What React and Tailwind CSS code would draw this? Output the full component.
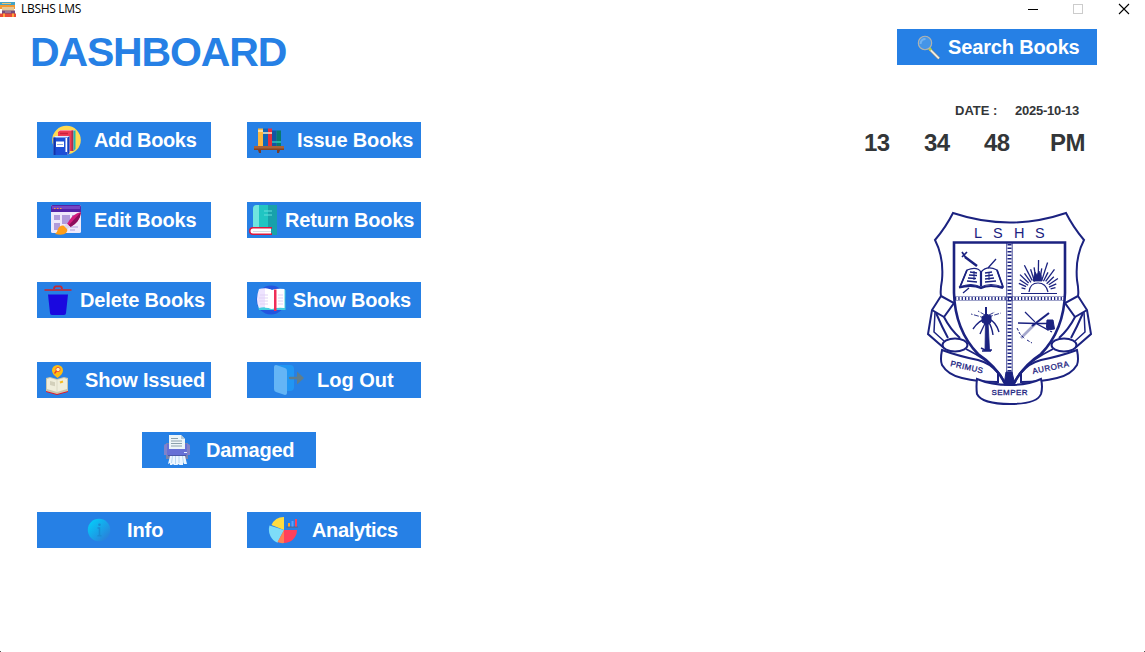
const NAVY = "#1b2280";

const icons = {
  add: (
    <>
      <circle cx="15.5" cy="15" r="14.3" fill="#ffda52" />
      <path d="M7 7l2-2h15v20H7z" fill="#ffd9e0" />
      <path d="M7 7l2-1.500h13V26H7z" fill="#f03a55" />
      <path d="M20.500 5.500h2V26h-2z" fill="#a6324f" />
      <path d="M22.500 5.500h2V24l-2 2z" fill="#20b8b0" />
      <path d="M9 8.500h8" stroke="#c8203c" strokeWidth="1.500" />
      <path d="M2.500 12.500l2-1.500h14v17l-2 2H2.500z" fill="#dfeaff" />
      <path d="M2.500 12.500h14V30H2.500z" fill="#1d4fd7" />
      <path d="M2.500 12.500h2V30h-2z" fill="#1335a8" />
      <path d="M16.500 12.500l2-1.500v17l-2 2z" fill="#1640bd" />
      <path d="M14.500 13h1.500v14h-1.500z" fill="#fff" />
      <path d="M5 16.500h8V22H5z" fill="#fff" />
      <path d="M6 19.500h6" stroke="#8ea8e6" />
    </>
  ),
  edit: (
    <>
      <rect width="30" height="28" rx="1.500" fill="#efe9fb" />
      <path d="M0 1.500Q0 0 1.500 0h27Q30 0 30 1.500V7H0z" fill="#5423a8" />
      <path d="M1 1h28v3H1z" fill="#7546c4" />
      <path d="M3 3.500h1.500M6 3.500h1.500M9 3.500h1.500" stroke="#ff9a3c" />
      <path d="M3 10h6v5H3zM3 18h6v7H3zM11 10h8v9h-8zM21 10h6v5h-6z" fill="#b19bdc" />
      <path d="M19 22h8M19 25h5" stroke="#c5b5e5" strokeWidth="1.500" />
      <path d="M30 7Q22 8 16 19l3.500 3Q29 17 30 7z" fill="#d31b7c" />
      <path d="M30 7L17.500 20.500l2 1.500Q29 17 30 7z" fill="#8c0d5c" />
      <path d="M15.500 18.500l4 3.500-4 2.500-3-3z" fill="#dcd7e8" />
      <path d="M12.500 20.500q-4-.5-5.500 3.500-1 4-3 5 8 2 11-1 2-2 1-4z" fill="#ff9e18" />
    </>
  ),
  issue: (
    <>
      <path d="M4 3.500h5V21H4z" fill="#ffb83e" />
      <path d="M9 3.500h5V21H9z" fill="#1266b8" />
      <path d="M14 3.500h4V21h-4z" fill="#e5303e" />
      <path d="M18 5.500h4.500V21H18z" fill="#1455a2" />
      <path d="M22.500 5.500H27V21h-4.500z" fill="#08796f" />
      <path d="M4 6h5M9 8h9" stroke="#ffe9bd" strokeWidth="1.500" />
      <path d="M18 17h9" stroke="#28c7bd" strokeWidth="1.500" />
      <path d="M0 21h30v4H0z" fill="#a96238" />
      <path d="M0 23.500h30V25H0z" fill="#854323" />
      <path d="M4 25h3v3H5zM23 25h3l-1 3h-2z" fill="#743d2b" />
    </>
  ),
  returned: (
    <>
      <path d="M4 4q0-4 4-4h20v30H4z" fill="#20c5c2" />
      <path d="M4 4q0-4 4-4h2v23H4z" fill="#70e5df" />
      <path d="M19 0h9v30h-9z" fill="#18a1aa" />
      <path d="M15 6h8M15 10h8" stroke="#64dfdb" />
      <path d="M23 22H4q-4 0-4 4t4 4h19v-1.500l-1-1V24l1-.5z" fill="#df173d" />
      <path d="M22 23.500H4q-2.500 0-2.500 2.500T4 28.500h18z" fill="#fff" />
      <path d="M4 26.500h18" stroke="#d5dbe2" />
    </>
  ),
  remove: (
    <>
      <path d="M1.500 5h27" stroke="#c62932" strokeWidth="1.600" />
      <path d="M11 4q0-2.500 2-2.700h4q2 .2 2 2.700" fill="none" stroke="#c62932" strokeWidth="1.800" />
      <path d="M5 9.500h20l-2 18.500q0 2-2 2H9q-2 0-2-2z" fill="#1a08df" />
    </>
  ),
  issued: (
    <>
      <path d="M4 25l11 3 11-3v2l-11 3-11-3z" fill="#e41628" />
      <path d="M4 13l4-1 7 2 7-2 4 1v13l-11 3-11-3z" fill="#c9c6ad" />
      <path d="M5 14l3-1 7 2 7-2 3 1v10l-10 3-10-3z" fill="#efeddb" />
      <path d="M15 15v12" stroke="#dcd9c5" />
      <path d="M8 16l5 1.200v4L8 20z" fill="#d3d0bb" />
      <path d="M18 17.500l3-1" stroke="#f6bb22" strokeWidth="2" />
      <path d="M15.500 13q-5.500-4-5.500-7.500a5.500 5.500 0 0 1 11 0q0 3.500-5.500 7.500z" fill="#ffbd12" />
      <circle cx="16" cy="4.500" r="2.200" fill="#fff1bb" stroke="#ef5a38" />
      <path d="M14.500 6l-2 2.500" stroke="#e73830" strokeWidth="1.300" />
    </>
  ),
  show: (
    <>
      <circle cx="15" cy="15" r="14.500" fill="#2355df" />
      <path d="M3 5Q10 3 16 5q6-2 13.500 0v20H3Q0 15 3 5z" fill="#43cee0" />
      <path d="M3 4q7-2 13 1v19q-7-3-13-1Q-1 15 3 4z" fill="#eee4ff" />
      <path d="M9 3.500q4 0 7 1.500v19q-3-1.500-7-1.500zM16 5q5-2 12.500-1v19q-6.500-1-12.500 1z" fill="#fff" />
      <path d="M4 10h8M3 13h9M3 16h9M4 19h8M22 10h5M22 13h5M22 16h5M22 19h5" stroke="#e1d2f5" />
      <path d="M18 4.500h2.500V26H18z" fill="#ef2e57" />
    </>
  ),
  logout: (
    <>
      <path d="M2 0h14q4 0 4 4v18q0 4-4 4h-5z" fill="#2196f3" />
      <path d="M0 2q0-2 2-2l9 3q2 .5 2 3v22q0 2-2 2l-9-3q-2-.5-2-3z" fill="#64b5f6" />
      <path d="M16 13h8" stroke="#607d8b" strokeWidth="2.300" strokeLinecap="round" />
      <path d="M23 6.500l7 6.500-7 6.500z" fill="#607d8b" />
    </>
  ),
  damaged: (
    <>
      <path d="M4 8h22v16H4z" fill="#7883ad" />
      <path d="M2 11q0-2 2-2h22q2 0 2 2v9H2z" fill="#6670d6" />
      <path d="M2 11q0-2 2-2h1v11H2zM25 9q3 0 3 2v9h-3z" fill="#8082c9" />
      <path d="M7 0h12l4 4v10H7z" fill="#eef5f8" />
      <path d="M19 0v4h4z" fill="#b6cbd8" />
      <path d="M9 3.500h7M9 6h11M9 8.500h11M9 11h11" stroke="#8ba0ac" />
      <path d="M22 17.500h3" stroke="#e6eeff" />
      <path d="M6 20.500h18" stroke="#4c58a8" />
      <path d="M8 21h15l2 8h-3l-1-2v3h-3.500l-1-1-1 1H12l-1-1-1 1H8v-2l-2 1z" fill="#edf6ff" />
      <path d="M10.500 21l-1 7M13.500 21v8M17 21v7M20.500 21l1 7" stroke="#a9d0ef" strokeWidth=".8" />
    </>
  ),
  info: (
    <>
      <defs>
        <linearGradient id="infoFill" x1="0" y1="0" x2="1" y2="1">
          <stop stopColor="#00d4fc" />
          <stop offset="1" stopColor="#2f75d6" />
        </linearGradient>
      </defs>
      <circle cx="15" cy="15" r="11.200" fill="url(#infoFill)" />
      <circle cx="15.500" cy="9.700" r="1.300" fill="#1a8cd4" />
      <path d="M13.500 13h2v7.500M13.500 20.800h4" fill="none" stroke="#1a8cd4" strokeWidth="1.500" />
    </>
  ),
  analytics: (
    <>
      <path d="M16 15L3.500 10A13.500 13.500 0 0 1 16 2z" fill="#ffdc3f" />
      <path d="M16 15L9.500 27.800A14.500 14.500 0 0 1 1.500 10.500z" fill="#7ddcf8" />
      <path d="M16 15L9.500 27Q12.500 28.500 16 28z" fill="#ff8052" />
      <path d="M16 15h13A13 13 0 0 1 16 28z" fill="#ff405b" />
      <path d="M18.500 12h11.500" stroke="#59617d" />
      <path d="M20 8h2v3.500h-2z" fill="#ffa526" />
      <path d="M23.500 6H25.500v5.500h-2z" fill="#5aa0ff" />
      <path d="M27 4h2v7.500h-2z" fill="#ff405b" />
    </>
  ),
  search: (
    <>
      <path d="M17.500 17l9.500 9.500" stroke="#807d70" strokeWidth="3" />
      <path d="M17.500 17l9.500 9.500" stroke="#eeeae1" strokeWidth="2" />
      <path d="M17 16l2 2" stroke="#b5d334" strokeWidth="2.500" />
      <circle cx="13" cy="11" r="6.700" fill="#4595e8" stroke="#b4b4ad" strokeWidth="1.100" />
      <path d="M8.500 12q.5-5 5-5" fill="none" stroke="#70b2f2" strokeWidth="2" />
    </>
  ),
};

function IconButton({ icon, label, pad, gap, tracking = "tracking-[-0.15px]", className = "w-[174px]" }) {
  return (
    <button className={`flex h-9 shrink-0 items-center bg-[#2680e5] text-[20px] leading-none font-bold whitespace-nowrap text-white ${pad} ${gap} ${tracking} ${className}`}>
      <svg viewBox="0 0 30 30" className="size-[30px] shrink-0">{icons[icon]}</svg>
      <span>{label}</span>
    </button>
  );
}

function TitleBar() {
  return (
    <header className="flex h-[18px] items-center">
      <svg viewBox="0 0 16 16" className="size-4">
        <path d="M0 1h15v4H0z" fill="#43a3c5" />
        <path d="M2 2.500h9" stroke="#efc36b" />
        <path d="M0 4h15v4H0z" fill="#f39832" />
        <path d="M2 6h12v4H2z" fill="#e5c795" />
        <path d="M2 9.500h13V13H2z" fill="#75497a" />
        <path d="M5 11h6" stroke="#bda2aa" />
        <path d="M0 12.500h16V17H0z" fill="#e94b39" />
        <path d="M3 12.500h2V17H3zM12 12.500h2V17h-2z" fill="#ffa63c" />
      </svg>
      <span className="ml-[5px] font-['Open_Sans',sans-serif] text-[12px] tracking-[-0.32px] text-black">LBSHS LMS</span>
      <svg viewBox="0 0 106 12" className="mr-[15px] ml-auto h-3 w-[106px]" fill="none">
        <path d="M4 6.500h10" stroke="#000" />
        <rect x="49.500" y="1.500" width="9" height="9" stroke="#ccc" />
        <path d="M95 1l10 10M105 1L95 11" stroke="#000" strokeWidth="1.100" />
      </svg>
    </header>
  );
}

const rays = [
  [-76, 13, 17], [-66, 13, 21], [-56, 12, 22], [-46, 13, 25], [-36, 12, 23], [-27, 13, 30], [-18, 11, 24], [-9, 12, 25],
  [1, 11, 32], [9, 12, 24], [18, 12, 31], [27, 12, 22], [36, 13, 28], [46, 12, 22], [56, 13, 24], [66, 12, 20], [76, 13, 18],
];

function CrestSide() {
  return (
    <>
      <path d="M21 91L12 105L8 129L24 143" />
      <path d="M21 91L34 98L24 112L12 105" />
      <path d="M15 107L14 127L24 136" strokeWidth="1.500" />
      <path d="M16 108Q22 122 28 133M24 112Q30 124 40 133" />
    </>
  );
}

function Crest() {
  return (
    <svg viewBox="0 0 180 205" className="h-[205px] w-[180px]" fill="none" stroke={NAVY} strokeWidth="2">
      <path d="M21 91Q20 86 22 75Q24 52 15 35Q26 22 33 8Q90 27 146 8Q153 22 164 35Q155 52 157 75Q159 86 158 91" />
      <CrestSide />
      <g transform="matrix(-1 0 0 1 179 0)">
        <CrestSide />
      </g>
      <path d="M22 145Q20 155 22 160Q28 170 42 173Q58 177 78 177V168Q70 158 58 155Q38 151 22 145Z" fill="#fff" />
      <path d="M157 145Q159 155 157 160Q151 170 137 173Q121 177 101 177V168Q109 158 121 155Q141 151 157 145Z" fill="#fff" />
      <path d="M34 37.500H145V88Q144 125 121 149Q104 160 94 178H85Q75 160 58 149Q35 125 34 88Z" fill="#fff" strokeWidth="2.600" />
      <path d="M46 144Q66 154 75 164Q82 170 84 178M133 144Q113 154 104 164Q97 170 95 178" strokeWidth="1.800" />
      <ellipse cx="35" cy="140" rx="12.500" ry="6.500" fill="#fff" />
      <ellipse cx="144" cy="140" rx="12.500" ry="6.500" fill="#fff" />
      <path d="M57 174Q56 182 57 189Q62 199 90 199Q117 199 121 189Q123 182 121 174Q108 180 90 180Q71 180 57 174Z" fill="#fff" />
      <path d="M86.700 38V170M92.200 38V170" strokeWidth=".8" />
      <path d="M89.500 39V172" strokeWidth="4" strokeDasharray="1.500 2" />
      <path d="M35 91.500H144M35 95.500H144" strokeWidth=".6" opacity=".7" />
      <path d="M35 93.500H144" strokeWidth="3" strokeDasharray="1.300 2" />
      <path d="M86 167L84 180H95L92 167Z" fill={NAVY} strokeWidth="1" />

      <g strokeWidth="1">
        <path d="M47 65Q57 61 61 67Q67 60 77 65L83 82Q70 77 61 82Q51 77 40 82Z" fill="#fff" strokeWidth="1.200" />
        <path d="M61 66V81M39 82.500Q52 79 61 83Q70 79 83 83" strokeWidth="2.200" />
        <path d="M40 82L47 65M83 82L77 65" strokeWidth="1.800" />
        <path d="M50 67l7 1M49 70l8 .5M48 73l8 .5M47 76l10 1M65 68l7-1M65 71l8-1M65 74l9-1M65 77l11-1" strokeWidth="1.300" />
        <path d="M54 66v9M69 67v8" strokeWidth="1" />
        <path d="M45 52l12 9" strokeWidth="2.500" />
        <path d="M68 63l8-9M43 88l6-5" strokeWidth="1.300" />
        <path d="M42 47l4 6M47 47l-5 5" strokeWidth="1.700" />
      </g>
      <g>
        <path d="M101 88.500h36M109 87q1-9 9-9t10 9" strokeWidth="1.200" />
        {rays.map(([angle, inner, outer]) => (
          <path key={angle} d={`M118 ${87 - inner}V${87 - outer}`} transform={`rotate(${angle} 118 87)`} strokeWidth="1.300" />
        ))}
        <path d="M113 76l2-9 2 3 2-4 2 4 1 6z" fill={NAVY} strokeWidth=".8" />
      </g>
      <g>
        <path d="M65.500 116L65 145h4.500L68 116" fill={NAVY} strokeWidth=".8" />
        <path d="M66 114Q59 115 53 124M67 115Q64 120 60 129M69 114Q76 117 79 127M68 116Q72 122 73 130" strokeWidth="1.400" />
        <path d="M65 113l-14-4M68 112l13-4M65 110l-7-4M69 110l6-3" strokeWidth=".9" strokeDasharray="5 1.500" />
        <path d="M66 113V102" strokeWidth="2" />
        <path d="M62 112l4-3 5 2v6l-4 3-5-3z" fill={NAVY} strokeWidth="1" />
        <path d="M61 143l4 2h7M62 146h9" strokeWidth="1.600" />
      </g>
      <g strokeWidth="1">
        <path d="M98 118l18 .5h12" strokeWidth="1.500" />
        <path d="M105 107l12 12 15 8" strokeWidth="1.300" strokeDasharray="14 2" />
        <path d="M129 108L112 121" strokeWidth="2.200" />
        <path d="M115 119L101 133" strokeWidth="2.600" opacity=".4" />
        <path d="M97 123l3 6 5 5M107 135l5 3" strokeDasharray="3 1.500" />
        <path d="M127 115h6l1.500 9-7 1-1-3z" fill={NAVY} />
      </g>
      <g fill={NAVY} stroke="none" fontFamily="Liberation Sans, sans-serif">
        <text x="54" y="33" fontSize="14.500">L</text>
        <text x="73" y="33" fontSize="14.500">S</text>
        <text x="94" y="33" fontSize="14.500">H</text>
        <text x="115" y="33" fontSize="14.500">S</text>
        <g fontSize="8" stroke={NAVY} strokeWidth=".3">
          <text x="30" y="161" textLength="33" transform="rotate(13 30 161)">PRIMUS</text>
          <text x="113" y="169" textLength="37" transform="rotate(-12 113 169)">AURORA</text>
          <text x="71.500" y="190" textLength="36">SEMPER</text>
        </g>
      </g>
    </svg>
  );
}

export default function App() {
  return (
    <div className="flex h-[652px] w-[1145px] flex-col overflow-hidden bg-white font-['Liberation_Sans',sans-serif]">
      <TitleBar />
      <main className="flex justify-between pr-12">
        <section className="flex flex-col pl-[30px]">
          <h1 className="mt-[10px] h-[94px] text-[41px] leading-[48px] font-bold tracking-[-1.15px] text-[#2680e5]">DASHBOARD</h1>
          <nav className="ml-[7px] flex w-[384px] flex-col">
            <div className="grid grid-cols-2 gap-x-9 gap-y-11">
              <IconButton icon="add" label="Add Books" pad="pl-[14px]" gap="gap-[13px]" tracking="tracking-[-0.35px]" />
              <IconButton icon="issue" label="Issue Books" pad="pl-[7px]" gap="gap-[13px]" />
              <IconButton icon="edit" label="Edit Books" pad="pl-[14px]" gap="gap-[13px]" tracking="tracking-[-0.2px]" />
              <IconButton icon="returned" label="Return Books" pad="pl-0.5" gap="gap-1.5" />
              <IconButton icon="remove" label="Delete Books" pad="pl-1.5" gap="gap-[7px]" />
              <IconButton icon="show" label="Show Books" pad="pl-[9px]" gap="gap-[7px]" tracking="tracking-[-0.2px]" />
              <IconButton icon="issued" label="Show Issued" pad="pl-[5px]" gap="gap-[13px]" tracking="tracking-[-0.2px]" />
              <IconButton icon="logout" label="Log Out" pad="pl-[27px]" gap="gap-[13px]" tracking="tracking-normal" />
            </div>
            <div className="mt-[34px] flex justify-center">
              <IconButton icon="damaged" label="Damaged" pad="pl-5" gap="gap-[14px]" tracking="tracking-[-0.25px]" />
            </div>
            <div className="mt-11 grid grid-cols-2 gap-x-9">
              <IconButton icon="info" label="Info" pad="pl-[47px]" gap="gap-[13px]" tracking="tracking-[-0.1px]" />
              <IconButton icon="analytics" label="Analytics" pad="pl-[21px]" gap="gap-[14px]" tracking="tracking-[-0.35px]" />
            </div>
          </nav>
        </section>
        <aside className="flex w-[233px] flex-col pt-[11px] text-[#333638]">
          <IconButton icon="search" label="Search Books" pad="pl-[15px]" gap="gap-1.5" className="w-[200px] self-end" />
          <div className="mt-[38px] flex h-4 items-center pl-[91px] text-[13px] leading-4 font-bold">
            <span className="w-[60px]">DATE :</span>
            <time className="tracking-[-0.25px]">2025-10-13</time>
          </div>
          <div className="mt-2.5 flex h-7 items-center text-[24px] leading-7 font-bold tracking-[-0.5px]">
            <span className="w-[60px]">13</span>
            <span className="w-[60px]">34</span>
            <span className="w-[66px]">48</span>
            <span>PM</span>
          </div>
          <div className="mt-12 ml-14">
            <Crest />
          </div>
        </aside>
      </main>
      <footer className="mt-auto flex justify-between">
        <span className="size-px bg-[#555]" />
        <span className="size-px bg-[#555]" />
      </footer>
    </div>
  );
}
